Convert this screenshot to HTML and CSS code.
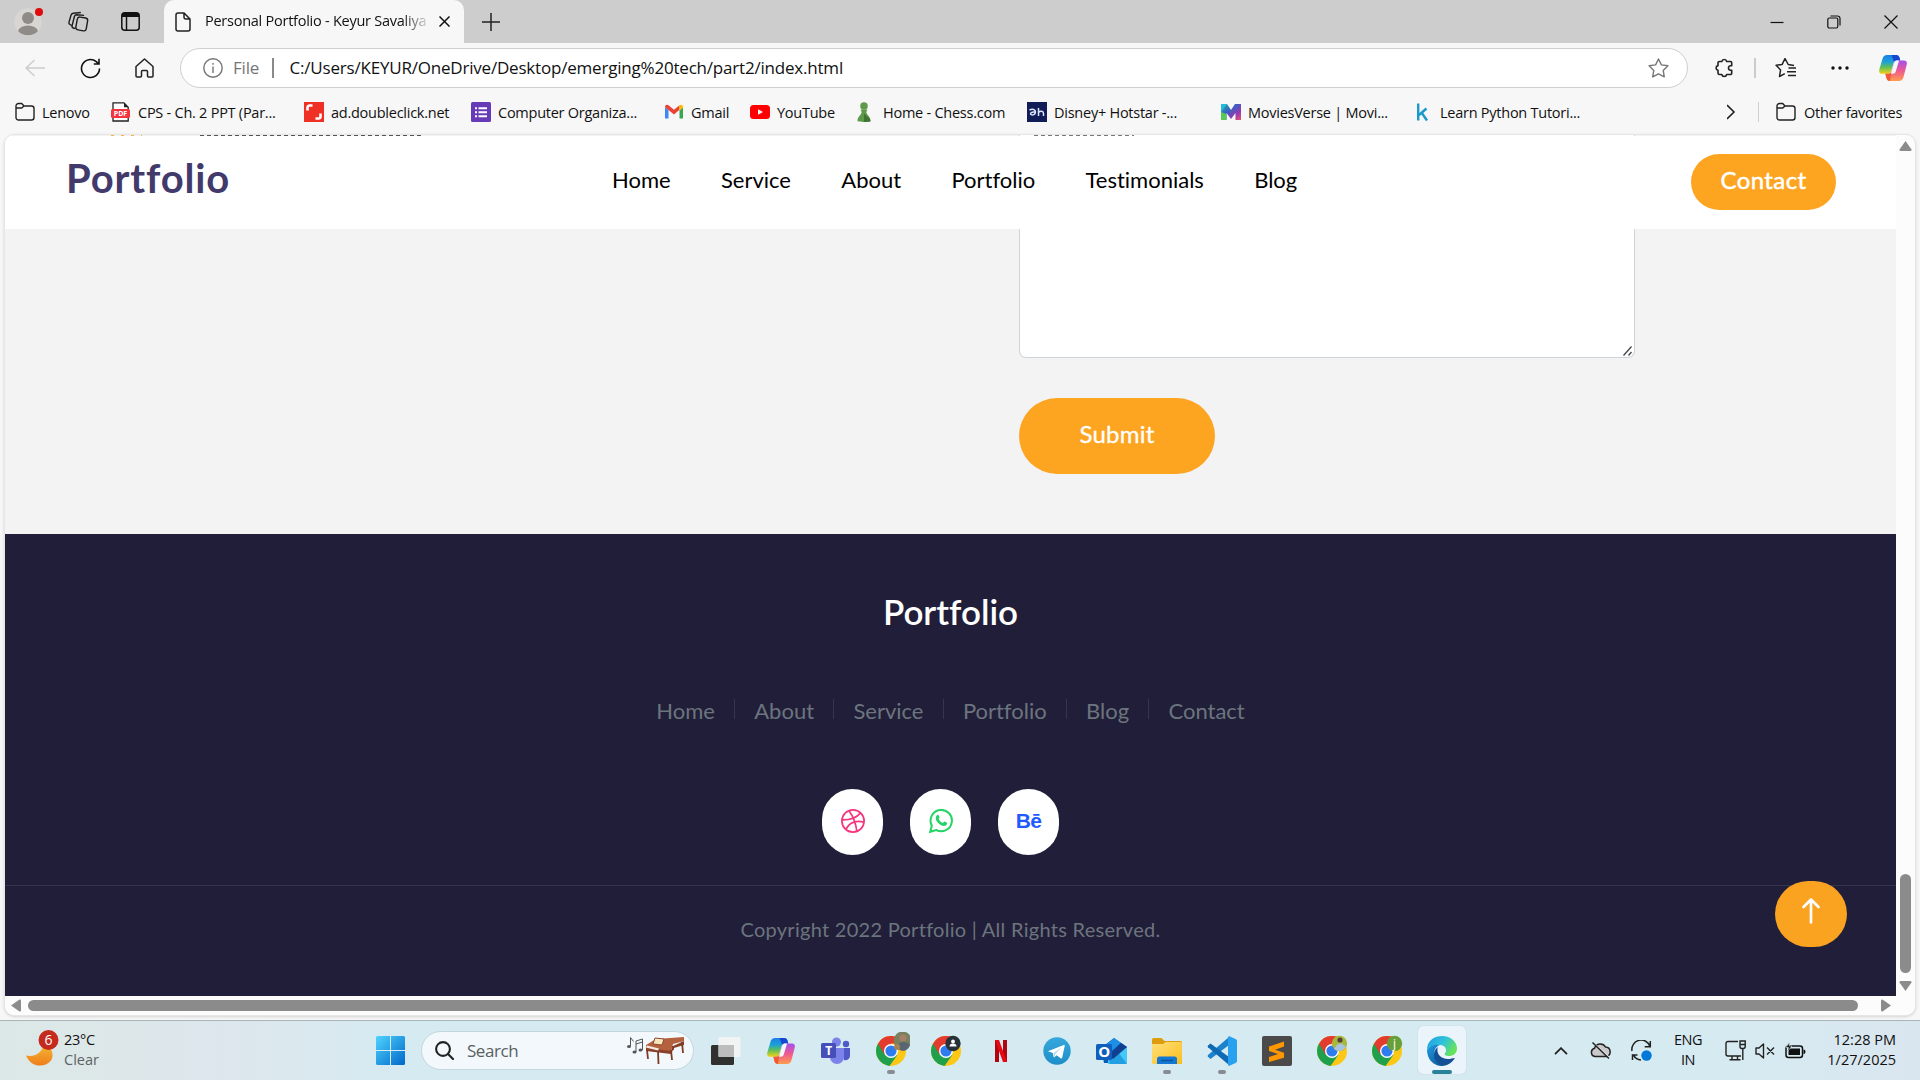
FILE: index.html
```html
<!DOCTYPE html>
<html lang="en">
<head>
<meta charset="utf-8">
<title>Personal Portfolio - Keyur Savaliya</title>
<link rel="stylesheet" href="styles.css">
</head>
<body>
<svg class="defs" aria-hidden="true">
  <defs>
    <linearGradient id="cpBlue" x1="0" y1="0" x2="0" y2="1"><stop offset="0" stop-color="#1b7ee8"/><stop offset=".35" stop-color="#1aa0d8"/><stop offset=".65" stop-color="#5fbf5a"/><stop offset="1" stop-color="#f5d312"/></linearGradient>
    <linearGradient id="cpPink" x1="0" y1="0" x2="0" y2="1"><stop offset="0" stop-color="#a44ff0"/><stop offset=".5" stop-color="#ee5a90"/><stop offset="1" stop-color="#ff9d4d"/></linearGradient>
    <linearGradient id="win" x1="0" y1="0" x2="1" y2="1"><stop offset="0" stop-color="#4fd4ff"/><stop offset="1" stop-color="#0067c8"/></linearGradient>
    <linearGradient id="moon" x1="0" y1="0" x2="0" y2="1"><stop offset="0" stop-color="#f6bb35"/><stop offset="1" stop-color="#ee7d1c"/></linearGradient>
    <linearGradient id="tg" x1="0" y1="0" x2="0" y2="1"><stop offset="0" stop-color="#36a8dc"/><stop offset="1" stop-color="#1d8ec9"/></linearGradient>
    <linearGradient id="fold" x1="0" y1="0" x2="1" y2="1"><stop offset="0" stop-color="#ffe07a"/><stop offset="1" stop-color="#fbbd1e"/></linearGradient>
    <linearGradient id="edgeTop" x1="0" y1="0" x2="1" y2=".5"><stop offset="0" stop-color="#1f9be0"/><stop offset=".55" stop-color="#2fc3dc"/><stop offset="1" stop-color="#66e35b"/></linearGradient>
    <linearGradient id="edgeLow" x1="0" y1="0" x2="1" y2="1"><stop offset="0" stop-color="#1b9de2"/><stop offset="1" stop-color="#114a8b"/></linearGradient>
    <linearGradient id="movie" x1="0" y1="0" x2="1" y2="1"><stop offset="0" stop-color="#18b9b0"/><stop offset=".4" stop-color="#3b5fc4"/><stop offset=".7" stop-color="#8e3bb0"/><stop offset="1" stop-color="#f0506e"/></linearGradient>
    <symbol id="copilot" viewBox="0 0 28 26">
      <path d="M8 0h9c2 0 3 1 3.600 3l.6 2.500h-3c-2 0-3 .8-3.600 2.700l-2.400 7.800c-.6 2-1.600 2.800-3.600 2.800H3C.6 18.800-.3 17 .3 14.600L3.600 3.500C4.300 1.200 5.700 0 8 0z" fill="url(#cpBlue)"/>
      <path d="M12.500 0H17c2 0 3 1 3.600 3l.6 2.500h-3c-1.500 0-2.500.4-3.100 1.500z" fill="#1747cf"/>
      <path d="M20 26h-9c-2 0-3-1-3.600-3l-1-4.200h2.500c2 0 3-.8 3.600-2.800l2.500-7.800c.6-2 1.600-2.700 3.500-2.700H25c2.400 0 3.400 1.900 2.700 4.300l-3.300 12.700C23.700 24.800 22.300 26 20 26z" fill="url(#cpPink)"/>
      <path d="M6.400 18.800h2.500c2 0 3-.8 3.600-2.800L11 26c-2 0-3-1-3.600-3z" fill="#ef5a35"/>
      <path d="M15.200 7.500c.6-1.400 1.500-2 3.300-2h1.600l-3.300 10.800c-.6 1.800-1.500 2.500-3.300 2.500h-1.600z" fill="#f4f6fa"/>
    </symbol>
    <symbol id="chrome" viewBox="0 0 30 30">
      <circle cx="15" cy="15" r="15" fill="#fdc715"/>
      <path d="M15 15 L2 7.500 A15 15 0 0 0 13.500 29.900 L21.500 18.800z" fill="#1ea04c"/>
      <path d="M2 7.500A15 15 0 0 1 28 7.500H15L8.500 18.800z" fill="#e33b2e"/>
      <circle cx="15" cy="15" r="7" fill="#fff"/><circle cx="15" cy="15" r="5.600" fill="#2f7bf0"/>
    </symbol>
    <symbol id="folder" viewBox="0 0 20 20">
      <path d="M1 4a2.500 2.500 0 0 1 2.500-2.500h3.200L9 4h7.500A2.500 2.500 0 0 1 19 6.500v9a2.500 2.500 0 0 1-2.500 2.500h-13A2.500 2.500 0 0 1 1 15.500zM1 6h5.700L9 4" fill="none" stroke="#222" stroke-width="1.400"/>
    </symbol>
  </defs>
</svg>

<div class="tabbar">
  <div class="tab-tools">
    <svg class="avatar" width="30" height="34" viewBox="0 0 30 34"><circle cx="15" cy="19" r="13.800" fill="#d8d6d2"/><circle cx="15" cy="15" r="6" fill="#8f8b86"/><path d="M5 28a10.200 7 0 0 1 20 0 13.800 13.800 0 0 1-20 0z" fill="#8f8b86"/><circle cx="26" cy="9" r="4" fill="#e00b0b"/></svg>
    <svg width="22" height="22" viewBox="0 0 22 22" fill="none" stroke="#1c1c1c" stroke-width="1.400"><rect x="9.500" y="6.500" width="10.500" height="13" rx="2.500" transform="rotate(10 15 13)"/><path d="M8.200 17.500 6.400 17a2 2 0 0 1-1.300-2.400L7.400 5.500a2.500 2.500 0 0 1 2.200-1.700l7.500.6M4.500 14.500 3 13.500a2 2 0 0 1-1-2.400L4 4.300A3 3 0 0 1 6.300 2.200l7.500-.7"/></svg>
    <svg width="19" height="19" viewBox="0 0 19 19"><rect x=".8" y=".8" width="17.400" height="17.400" rx="3" fill="none" stroke="#111" stroke-width="1.500"/><path d="M1 5V3a2 2 0 0 1 2-2h13a2 2 0 0 1 2 2v2z" fill="#111"/><path d="M5.500 5v13" stroke="#111" stroke-width="1.500"/></svg>
  </div>
  <div class="tab">
    <svg width="16" height="20" viewBox="0 0 16 20" fill="none" stroke="#222" stroke-width="1.500"><path d="M1 3a2 2 0 0 1 2-2h6l6 6v10a2 2 0 0 1-2 2H3a2 2 0 0 1-2-2zM9 1v4a2 2 0 0 0 2 2h4"/></svg>
    <span class="tab-title">Personal Portfolio - Keyur Savaliya</span>
    <svg class="tab-close" width="11" height="11" viewBox="0 0 11 11" stroke="#111" stroke-width="1.500"><path d="M.5.5l10 10M10.500.5l-10 10"/></svg>
  </div>
  <svg class="plus" width="18" height="18" viewBox="0 0 18 18" stroke="#222" stroke-width="1.500"><path d="M9 0v18M0 9h18"/></svg>
  <div class="window-buttons">
    <svg width="14" height="14" viewBox="0 0 14 14" stroke="#111" stroke-width="1.200"><path d="M.5 7.500h13"/></svg>
    <svg width="14" height="14" viewBox="0 0 14 14" fill="none" stroke="#111" stroke-width="1.200"><rect x=".8" y="3" width="10" height="10" rx="1.500"/><path d="M3.500 1h7a2.500 2.500 0 0 1 2.500 2.500V10.500"/></svg>
    <svg width="14" height="14" viewBox="0 0 14 14" stroke="#111" stroke-width="1.200"><path d="M.5.5l13 13M13.500.5l-13 13"/></svg>
  </div>
</div>

<div class="toolbar">
  <div class="nav-buttons">
    <svg width="20" height="18" viewBox="0 0 20 18" fill="none" stroke="#ccc" stroke-width="1.400"><path d="M9.500 1 1 9l8.500 8M1 9h19"/></svg>
    <svg width="21" height="21" viewBox="0 0 21 21" fill="none" stroke="#111" stroke-width="1.600"><path d="M19.500 10.500a9 9 0 1 1-3.200-6.900L18.800 6M19 .8V6h-5.200"/></svg>
    <svg width="19" height="20" viewBox="0 0 19 20" fill="none" stroke="#222" stroke-width="1.500" stroke-linejoin="round"><path d="M1 8.500 9.500 1 18 8.500V18a1 1 0 0 1-1 1h-3.500a1 1 0 0 1-1-1v-4.500a1 1 0 0 0-1-1h-4a1 1 0 0 0-1 1V18a1 1 0 0 1-1 1H2a1 1 0 0 1-1-1z"/></svg>
  </div>
  <div class="address">
    <svg width="20" height="20" viewBox="0 0 20 20" fill="none" stroke="#757575" stroke-width="1.400"><circle cx="10" cy="10" r="9.200"/><path d="M10 8.500V15M10 5v1.800"/></svg>
    <span class="scheme">File</span><i class="bar"></i>
    <span class="url">C:/Users/KEYUR/OneDrive/Desktop/emerging%20tech/part2/index.html</span>
    <svg class="star" width="21" height="20" viewBox="0 0 21 20" fill="none" stroke="#777" stroke-width="1.400" stroke-linejoin="round"><path d="M10.500 1l2.900 5.900 6.500.9-4.700 4.600 1.100 6.500-5.800-3.100-5.800 3.100 1.100-6.500L1.100 7.800l6.500-.9z"/></svg>
  </div>
  <div class="toolbar-right">
    <svg width="20" height="20" viewBox="0 0 20 20" fill="none" stroke="#222" stroke-width="1.600" stroke-linejoin="round"><path d="M5.500 3.500h2.300a2.500 2.500 0 0 1 4.900 0h3.800a1.200 1.200 0 0 1 1.200 1.200v3.100h-1a2.200 2.200 0 0 0 0 4.400h1v3.100a1.200 1.200 0 0 1-1.200 1.200h-3.800a2.500 2.500 0 0 1-4.900 0H5.500a1.500 1.500 0 0 1-1.500-1.500v-2.700a2.400 2.400 0 0 1 0-4.700V5a1.500 1.500 0 0 1 1.500-1.500z"/></svg>
    <i class="bar"></i>
    <svg width="22" height="20" viewBox="0 0 22 20" fill="none" stroke="#222" stroke-width="1.500" stroke-linejoin="round"><path d="M19 8l-5.800-1L10 1 7.200 6.900l-6.100.9 4.500 4.600L4.500 19l5.300-2.900M13.500 10.400H21M12 14.200h9M13 18h8" transform="translate(0 -.500)"/></svg>
    <svg width="18" height="4" viewBox="0 0 18 4" fill="#111"><circle cx="2" cy="2" r="1.700"/><circle cx="9" cy="2" r="1.700"/><circle cx="16" cy="2" r="1.700"/></svg>
    <svg width="28" height="26"><use href="#copilot"/></svg>
  </div>
</div>

<div class="bookmarks">
  <span class="bm"><svg><use href="#folder"/></svg>Lenovo</span>
  <span class="bm"><svg viewBox="0 0 20 20"><path d="M2 .8h11l4.200 4.400V19H2z" fill="#fff" stroke="#222" stroke-width="1.300"/><path d="M13 .8v4.400h4.200" fill="#222"/><rect x="0" y="7" width="19" height="9" rx="1.500" fill="#f5333f"/><text x="9.500" y="14" text-anchor="middle" class="pdf">PDF</text></svg>CPS - Ch. 2 PPT (Par...</span>
  <span class="bm"><svg viewBox="0 0 20 20"><path fill="#ee3124" d="M0 0h20v20H0z"/><path d="M3.500 8.500V5.500a2 2 0 0 1 2-2h3M16.500 11.500v3a2 2 0 0 1-2 2h-3" fill="none" stroke="#fff" stroke-width="2.600"/></svg>ad.doubleclick.net</span>
  <span class="bm"><svg viewBox="0 0 20 20"><rect width="20" height="20" rx="1.500" fill="#673ab7"/><path d="M4 6.200h2M4 10.200h2M4 14.200h2M7.500 6.200H16M7.500 10.200H16M7.500 14.200H16" stroke="#fff" stroke-width="2"/></svg>Computer Organiza...</span>
  <span class="bm"><svg viewBox="0 0 20 20"><path d="M1 5v11.500h3.500V8z" fill="#4285f4"/><path d="M19 5v11.500h-3.500V8z" fill="#34a853"/><path d="M1 5c0-2.500 2.300-2.800 3.500-1.700L10 7.800l5.500-4.500v4.500L10 12.500 4.500 8z" fill="#ea4335"/><path d="M15.500 3.300C16.900 2.200 19 2.700 19 5v.8l-3.500 3z" fill="#fbbc04"/></svg>Gmail</span>
  <span class="bm"><svg viewBox="0 0 20 20"><rect y="3" width="20" height="14" rx="3.500" fill="#f00"/><path d="M8 7.200v5.600l5-2.800z" fill="#fff"/></svg>YouTube</span>
  <span class="bm"><svg viewBox="0 0 20 20" fill="#5d9948"><circle cx="8" cy="4" r="3.800"/><path d="M4.500 7.500h7L10.300 10c.5 3.500 4.200 4 4.200 9 0 1.200-13 1.200-13 0 0-5 3.700-5.500 4.200-9z"/><path d="M8 11c.8 3 6.500 4 6.500 8 0 .7-4 1-6.500.9z" fill="#3f7434"/></svg>Home - Chess.com</span>
  <span class="bm"><svg viewBox="0 0 20 20"><path fill="#101d56" d="M0 0h20v20H0z"/><path d="M2.500 8c3-1.500 6-.5 6 2s-3 3.500-4.500 2.500S5 9.500 8 10.200M11.500 6v8M11.500 10.500c2-2 5-1.500 5 1V14" fill="none" stroke="#dce4ff" stroke-width="1.500"/></svg>Disney+ Hotstar -...</span>
  <span class="bm"><svg viewBox="0 0 20 20"><path d="M0 2h6l4 6 4-6h6v16h-5.500v-7L10 17l-4.500-6v7H0z" fill="url(#movie)"/><path d="M0 2h6l-6 8z" fill="#26bdd6"/><path d="M0 10l5.500 2v6H0z" fill="#57c957"/></svg>MoviesVerse | Movi...</span>
  <span class="bm"><svg viewBox="0 0 20 20" fill="none" stroke="#1a9acb" stroke-width="2.400"><path d="M5.200 1.500v17M13.500 6.500 6 13M8.500 10.500l5.500 8"/></svg>Learn Python Tutori...</span>
  <span class="bm more"><svg viewBox="0 0 20 20" fill="none" stroke="#222" stroke-width="1.600"><path d="M0 3l7 7-7 7"/></svg></span>
  <span class="bm other"><svg><use href="#folder"/></svg>Other favorites</span>
</div>

<div class="frame">
  <div class="row">
    <main class="page">
      <div class="sliver"><i class="s1"></i><i class="s2"></i><i class="s3"></i></div>
      <header class="site-header">
        <div class="logo">Portfolio</div>
        <nav class="menu"><a>Home</a><a>Service</a><a>About</a><a>Portfolio</a><a>Testimonials</a><a>Blog</a></nav>
        <a class="contact">Contact</a>
      </header>
      <section class="form">
        <div class="message"><svg width="9" height="10" viewBox="0 0 9 10" stroke="#444" stroke-width="1.300"><path d="M.5 9.500l8-9M5.500 9.500l3-3.500"/></svg></div>
        <a class="submit">Submit</a>
      </section>
      <footer class="footer">
        <h2>Portfolio</h2>
        <nav class="links"><a>Home</a><a>About</a><a>Service</a><a>Portfolio</a><a>Blog</a><a>Contact</a></nav>
        <div class="social">
          <a><svg width="24" height="24" viewBox="0 0 16 16" fill="none" stroke="#f5357f" stroke-width="1.150"><circle cx="8" cy="8" r="7.400"/><path d="M5.300 1.200C7.800 4.500 9.800 9 10.600 15M.7 7.300c5 .1 9.300-.8 12.200-4.600M3.200 13.500C5.500 9.300 9.500 7.300 15.300 8.700"/></svg></a>
          <a><svg width="24" height="24" viewBox="0 0 16 16"><path d="M.8 15.200l1.100-4.100A7.100 7.100 0 1 1 4.800 14z" fill="none" stroke="#25d366" stroke-width="1.350"/><path d="M5.300 4.100c.6-.6 1-.3 1.200.2l.5 1.200c.2.500-.5 1-.5 1.300.4 1 1.400 1.900 2.600 2.400.5 0 .8-1 1.200-.9l1.500.7c.6.300.1 1.600-.5 2-1.500.8-3.600-.1-5-1.500C4.500 7.700 3.900 5.500 5.300 4.100z" fill="#25d366"/></svg></a>
          <a class="behance">Bē</a>
        </div>
        <p class="copyright">Copyright 2022 Portfolio | All Rights Reserved.</p>
      </footer>
      <a class="to-top"><svg width="18" height="26" viewBox="0 0 18 26" fill="none" stroke="#fff" stroke-width="2.700" stroke-linecap="round" stroke-linejoin="round"><path d="M9 24.500v-23M1.500 9 9 1.500 16.500 9"/></svg></a>
    </main>
    <div class="vscroll">
      <svg width="13" height="10" viewBox="0 0 13 10" fill="#8b8b8b"><path d="M6.500 0 12.500 8.500q0 1.500-1 1.500h-10q-1 0-1-1.500z"/></svg>
      <i class="vthumb"></i>
      <svg width="13" height="10" viewBox="0 0 13 10" fill="#8b8b8b"><path d="M6.500 10 12.500 1.500q0-1.500-1-1.500h-10q-1 0-1 1.500z"/></svg>
    </div>
  </div>
  <div class="hscroll">
    <svg width="10" height="13" viewBox="0 0 10 13" fill="#8b8b8b"><path d="M0 6.500 8.500.5q1.500 0 1.500 1v10q0 1-1.500 1z"/></svg>
    <i class="hthumb"></i>
    <svg width="10" height="13" viewBox="0 0 10 13" fill="#8b8b8b"><path d="M10 6.500 1.500.5Q0 .5 0 1.500v10q0 1 1.500 1z"/></svg>
  </div>
</div>

<div class="taskbar">
  <div class="weather">
    <svg width="34" height="36" viewBox="0 0 34 36"><path d="M1 25.500c10 2 16-3 18-12 9 4 10 12 7 17-5 7-20 8-25-5z" fill="url(#moon)"/><circle cx="23.500" cy="10" r="10" fill="#c42b1c"/><text x="23.500" y="15" text-anchor="middle" class="badge">6</text></svg>
    <div><div>23°C</div><div class="dim">Clear</div></div>
  </div>
  <svg class="start" width="29" height="29" viewBox="0 0 29 29" fill="url(#win)"><path d="M1.500 0H14v14H0V1.500Q0 0 1.500 0zM15 0h12.500Q29 0 29 1.500V14H15zM0 15h14v14H1.500Q0 29 0 27.500zM15 15h14v12.500q0 1.500-1.500 1.500H15z"/></svg>
  <div class="search">
    <svg width="19" height="19" viewBox="0 0 19 19" fill="none" stroke="#222" stroke-width="2.100" stroke-linecap="round"><circle cx="8" cy="8" r="6.900"/><path d="M13 13l5 5"/></svg>
    <span>Search</span>
    <svg class="piano" width="60" height="30" viewBox="0 0 60 30"><g fill="#555"><ellipse cx="3" cy="10.500" rx="2" ry="1.500"/><ellipse cx="8.500" cy="16" rx="2" ry="1.500"/><ellipse cx="14.500" cy="14" rx="2" ry="1.500"/></g><path d="M4.500 10V1.500l3 4M10 16V5l6.500-2v11M10 8l6.500-2" fill="none" stroke="#555" stroke-width="1"/><path d="M20 9 30 3 58 1v4L47 8l-2 8-25-2z" fill="#b5603f"/><path d="M20 12l25 3 2-5 11-5v4l-10 3-3 6-25-3z" fill="#8a4129"/><path d="M21 14l1 9M32 15l.5 13M45 14l1 10M56 6l1 11M47 10v4" stroke="#7d3b26" stroke-width="1.800"/><path d="M21 9.500l12 3-1 2-12-3z" fill="#f5eee2"/><path d="M29 2l9 1-2 6-9-1z" fill="#f6e7bd" stroke="#8b4a2d" stroke-width="1"/></svg>
  </div>
  <div class="apps">
    <span class="app"><svg width="30" height="30" viewBox="0 0 30 30"><rect x="0" y="9" width="23" height="20" rx="1.500" fill="#30302f"/><rect x="7.500" y="1" width="22" height="20" rx="1.500" fill="#f4f4f4" fill-opacity=".92"/><path d="M7.500 9H23v12H7.500z" fill="#bdbdbd"/></svg></span>
    <span class="app"><svg width="28" height="26"><use href="#copilot"/></svg></span>
    <span class="app"><svg width="30" height="28" viewBox="0 0 30 28"><circle cx="25" cy="7" r="3.200" fill="#5059c9"/><path d="M21 11h8v8a4.500 4.500 0 0 1-6 4z" fill="#5059c9"/><circle cx="15.500" cy="5" r="4.500" fill="#7b83eb"/><path d="M9 11h14v9a7 7 0 0 1-14 0z" fill="#7b83eb"/><rect y="6" width="15" height="15" rx="1.500" fill="#464eb8"/><text x="7.500" y="18" text-anchor="middle" class="tile-letter small">T</text></svg></span>
    <span class="app open"><svg width="38" height="38" viewBox="0 0 38 38"><use href="#chrome" x="4" y="4" width="30" height="30"/><circle cx="30" cy="8.500" r="8" fill="#78805f" transform="translate(-3 -1) scale(1.120)"/><circle cx="31" cy="6" r="3.500" fill="#a58067"/><path d="M24 16q6-11 14-3-2 6-8 6z" fill="#59666f"/><circle cx="25" cy="15" r="3" fill="#a38456"/></svg></span>
    <span class="app"><svg width="38" height="38" viewBox="0 0 38 38"><use href="#chrome" x="4" y="4" width="30" height="30"/><circle cx="26" cy="11.500" r="7.700" fill="#263238"/><circle cx="26" cy="9.500" r="1.900" fill="#fff"/><path d="M22.500 14.500q0-3 3.500-3t3.500 3z" fill="#fff"/></svg></span>
    <span class="app"><svg width="12" height="22" viewBox="0 0 12 22"><path d="M0 0h4v22H0zM8 0h4v22H8z" fill="#b1060f"/><path d="M0 0h4l8 22H8z" fill="#e50914"/></svg></span>
    <span class="app"><svg width="28" height="28" viewBox="0 0 28 28"><circle cx="14" cy="14" r="13.700" fill="url(#tg)"/><path d="M5.500 14 20.700 8c1-.3 1.200.3 1 1l-2.500 11.500c-.2 1-.9 1.200-1.600.7l-4-3-2 1.900c-.5.400-.9.100-1-.4l-.8-3.800-4.200-1.300c-.6-.2-.6-.4-.1-.6z" fill="#fff"/><path d="M10.500 16l8-5.500-6.200 6.500-.8 3z" fill="#b9d7ea"/></svg></span>
    <span class="app"><svg width="31" height="28" viewBox="0 0 31 28"><path d="M5 11 18 1l13 9v14a2 2 0 0 1-2 2H8z" fill="#0a5bb3"/><path d="M7 10 18 1l7 5-14 12z" fill="#1c8fe6"/><path d="M12 20 31 10v14q0 3-3 3H12z" fill="#42c9f5"/><path d="M12 20l10-5 9 12H14z" fill="#23a0e4"/><path d="M13 18 25 6l6 4-14 12z" fill="#103f91"/><rect y="7" width="16" height="16" rx="1.500" fill="#0f5fbd"/><text x="8" y="20" text-anchor="middle" class="tile-letter">O</text></svg></span>
    <span class="app open"><svg width="30" height="28" viewBox="0 0 30 28"><path d="M0 2.500Q0 1 1.500 1h8L12.500 4h16Q30 4 30 5.500V14H0z" fill="#dd9d0e"/><path d="M0 7h11l3-2h14.500Q30 5 30 6.500V27H1.500Q0 27 0 25.500z" fill="url(#fold)"/><path d="M5 27v-5q0-2.500 2.500-2.500h15q2.500 0 2.500 2.500v5z" fill="#1377d4"/><path d="M9 23.500h12" stroke="#0b559f" stroke-width="1.500"/></svg></span>
    <span class="app open"><svg width="30" height="30" viewBox="0 0 30 30"><path d="M22 1v8L3.500 23 1 20.800q-.8-.8 0-1.700z" fill="#1a83cc"/><path d="M22 29v-8L3.500 7.500 1 9.500q-.8.800 0 1.700z" fill="#0f6ab5"/><path d="M22 0l7 3.200q1 .5 1 1.800v20q0 1.300-1 1.800L22 30q-1-.5-1-2V2q0-1.500 1-2z" fill="#28a1f0"/></svg></span>
    <span class="app"><svg width="30" height="30" viewBox="0 0 30 30"><rect width="30" height="30" rx="2" fill="#4a4a4a"/><path d="M7 10.500 22 5.500v5L13 13.700l9 3v5L7 26v-5l9-3-9-3z" fill="#ff9800"/></svg></span>
    <span class="app"><svg width="38" height="38" viewBox="0 0 38 38"><use href="#chrome" x="4" y="4" width="30" height="30"/><circle cx="26.500" cy="11.500" r="7.700" fill="#a7b83c"/><circle cx="27" cy="8" r="2.600" fill="#53423a"/><path d="M21 17q5-10 12-2-5 7-12 2z" fill="#a9c4dd"/></svg></span>
    <span class="app"><svg width="38" height="38" viewBox="0 0 38 38"><use href="#chrome" x="4" y="4" width="30" height="30"/><circle cx="26.500" cy="11.500" r="7.700" fill="#689f38"/><text x="26.500" y="15.500" text-anchor="middle" class="initial">j</text></svg></span>
    <span class="app active"><svg width="30" height="30" viewBox="0 0 30 30"><path d="M0 14C0 4 8 0 15 0c9 0 15 6 15 12.500 0 5-4 7.500-8 7.500-3 0-5-1-4.300-2.200 2.800-3 1.300-8.300-4-8.800C8 8.500 3 9.500 0 14z" fill="url(#edgeTop)"/><path d="M0 14c2.500-4.500 8-6 13-5-6 2-7 9-4 14 3 4 8 6.500 12 5.500-3 1.500-7 2-10 1C4 27.500 0 21 0 14z" fill="url(#edgeLow)"/><path d="M11 11c-2 5 1 12 10 12 3 0 6-1.500 6.500-1 .6.600-3 5-7 6.700C14 30.500 7 26 7 19c0-3.500 1.500-6.500 4-8z" fill="#124f95"/></svg></span>
  </div>
  <div class="tray">
    <svg width="14" height="8" viewBox="0 0 14 8" fill="none" stroke="#222" stroke-width="1.800"><path d="M1 7.200l6-6 6 6"/></svg>
    <svg width="21" height="17" viewBox="0 0 21 17"><path d="M5 14.500a4.200 4.200 0 0 1-.5-8.200A6 6 0 0 1 15.500 5a4.800 4.800 0 0 1 .8 9.500z" fill="#c9c9c9" stroke="#222" stroke-width="1.500"/><path d="M3.500 1l16.500 15" stroke="#e8eff2" stroke-width="1.500"/><path d="M2.500.5l16.500 16" stroke="#222" stroke-width="1.500"/></svg>
    <svg width="21" height="21" viewBox="0 0 21 21" fill="none" stroke="#222" stroke-width="1.500"><path d="M1 11A9.300 9.300 0 0 1 19 6.500M19.300 1v5.700h-5.600M10 20a9 9 0 0 1-7.500-4.800M1.500 20v-5h5"/><circle cx="15.500" cy="15.500" r="5.200" fill="#0078d7" stroke="none"/></svg>
    <div class="lang">ENG<br>IN</div>
    <svg width="21" height="21" viewBox="0 0 21 21" fill="none" stroke="#222" stroke-width="1.400"><path d="M13 1.500H3a2 2 0 0 0-2 2V14a2 2 0 0 0 2 2h13M7 16v3.800M12.500 16v3.800M4.500 19.800h11M17.800 9v11M15 1h5.200v5.500a2 2 0 0 1-2 2H17a2 2 0 0 1-2-2zM15 4.500h5"/></svg>
    <svg width="20" height="16" viewBox="0 0 20 16" fill="none" stroke="#222" stroke-width="1.400" stroke-linejoin="round"><path d="M1 5h3l4.500-4v14L4 11H1zM12 4.500l7 7M19 4.500l-7 7"/></svg>
    <svg width="21" height="17" viewBox="0 0 21 17"><rect x="1" y="4" width="16.500" height="11.500" rx="2.500" fill="none" stroke="#111" stroke-width="1.500"/><rect x="3.500" y="6.500" width="11.500" height="6.500" fill="#111"/><path d="M18.500 7.500q2 0 2 2.200t-2 2.200z" fill="#111"/><path d="M4.500 0 1 5.500h2.500L2.500 9.500 7 4H4.200z" fill="#111" stroke="#d7e9f0" stroke-width=".6"/></svg>
    <div class="clock">12:28 PM<br>1/27/2025</div>
  </div>
</div>
</body>
</html>
```
FILE: styles.css
```css
* { box-sizing: border-box; }
body {
  margin: 0; width: 1920px; height: 1080px; overflow: hidden;
  display: flex; flex-direction: column;
  background: #f7f7f7; color: #111;
  font-family: "Open Sans", "Noto Sans", sans-serif; font-size: 14.5px; letter-spacing: -0.25px;
}
svg { display: block; flex: none; }
.defs { position: absolute; width: 0; height: 0; }

/* browser tab strip */
.tabbar { height: 43px; background: #cdcdcd; display: flex; align-items: center; flex: none; }
.tab-tools { width: 164px; padding-left: 13px; display: flex; align-items: center; }
.tab-tools svg:nth-child(1) { margin-bottom: 4px; }
.tab-tools svg:nth-child(2) { margin-left: 24px; }
.tab-tools svg:nth-child(3) { margin-left: 32px; }
.tab {
  width: 300px; height: 43px; background: #f7f7f7; border-radius: 10px 10px 0 0;
  display: flex; align-items: center; padding: 0 14px 0 11px;
}
.tab-title {
  margin-left: 14px; width: 224px; overflow: hidden; white-space: nowrap; padding-bottom: 2px;
  -webkit-mask-image: linear-gradient(90deg, #000 88%, transparent 101%);
  mask-image: linear-gradient(90deg, #000 88%, transparent 101%);
}
.tab-close { margin-left: auto; }
.plus { margin-left: 18px; }
.window-buttons { margin-left: auto; padding-right: 22px; display: flex; gap: 43px; }

/* address row */
.toolbar { height: 50px; flex: none; display: flex; align-items: center; padding-right: 13px; }
.nav-buttons { width: 180px; padding-left: 25px; display: flex; align-items: center; }
.nav-buttons svg:nth-child(2) { margin-left: 35px; }
.nav-buttons svg:nth-child(3) { margin-left: 34px; }
.address {
  width: 1508px; height: 40px; background: #fff; border: 1px solid #cfcfcf; border-radius: 20px;
  display: flex; align-items: center; padding: 0 18px 0 22px; font-size: 17px; letter-spacing: -0.2px;
}
.address span { padding-bottom: 2px; }
.scheme { margin-left: 10px; width: 39px; color: #767676; }
.bar { width: 1.500px; height: 20px; background: #8a8a8a; }
.url { margin-left: 16px; }
.star { margin-left: auto; }
.toolbar-right { flex: 1; display: flex; align-items: center; padding-left: 26px; }
.toolbar-right .bar { background: #ccc; margin: 0 19px 0 20px; }
.toolbar-right svg:nth-child(4) { margin-left: 34px; }
.toolbar-right svg:nth-child(5) { margin-left: auto; }

/* favorites row */
.bookmarks {
  height: 41px; flex: none; padding: 0 18px 3px 15px; display: grid; align-items: center;
  grid-template-columns: 96px 193px 167px 193px 86px 106px 171px 194px 192px 314px 31px 1fr;
}
.bm { display: flex; align-items: center; gap: 7px; white-space: nowrap; }
.bm svg { width: 20px; height: 20px; }
.other { border-left: 1px solid #d0d0d0; height: 20px; padding-left: 17px; gap: 8px; }
.pdf { font: 700 7px "Open Sans", sans-serif; fill: #fff; letter-spacing: 0; }

/* viewport */
.frame {
  margin: 0 4px 4px; height: 882px; flex: none; border: 1px solid #e6e6e6; border-radius: 10px;
  background: #fcfcfc; overflow: hidden; display: flex; flex-direction: column;
  box-shadow: 0 1px 3px rgba(0, 0, 0, .14);
}
.row { display: flex; height: 861px; }
.page {
  width: 1891px; background: #f3f3f3; display: flex; flex-direction: column; position: relative;
  font-family: Lato, sans-serif; letter-spacing: 0; font-variant-ligatures: none;
}
.sliver { height: 1px; display: flex; flex: none; padding-left: 106px; }
.s1 { width: 31px; background: repeating-linear-gradient(90deg, #f3b34b 0 3px, transparent 3px 10px); }
.s2 { width: 224px; margin-left: 58px; background: repeating-linear-gradient(90deg, #555 0 4px, transparent 4px 7px); }
.s3 { width: 616px; margin-left: 595px; border: solid #ced4da; border-width: 0 1px; background: linear-gradient(90deg, #fff 13px, transparent 13px 114px, #fff 114px), repeating-linear-gradient(90deg, #777 0 4px, #fff 4px 7px); }

.site-header {
  height: 93px; flex: none; background: #fff; display: grid; align-items: center;
  grid-template-columns: 545px 1fr auto; padding: 0 60px 0 61px;
}
.logo { font-size: 40px; font-weight: 700; letter-spacing: .85px; color: #413a6b; padding-bottom: 9px; }
.menu { display: flex; gap: 50.300px; font-size: 22px; color: #000; padding: 0 0 6px 1px; }
.contact {
  width: 145px; height: 56px; border-radius: 28px; background: #fda521; color: #fff;
  font-size: 24px; letter-spacing: .4px; display: flex; align-items: center; justify-content: center;
  margin-bottom: 2px; padding-bottom: 4px; font-weight: 400; -webkit-text-stroke: .5px #fff;
}
.form { height: 305px; flex: none; padding-left: 1014px; }
.message {
  width: 616px; height: 129px; background: #fff; border: 1px solid #ced4da; border-top: 0;
  border-radius: 0 0 7px 7px; display: flex; align-items: flex-end; justify-content: flex-end; padding: 1px 2px;
}
.submit {
  margin-top: 40px; width: 196px; height: 76px; border-radius: 38px; background: #fda521; color: #fff;
  display: flex; align-items: center; justify-content: center; font-size: 24px; letter-spacing: .2px; padding-bottom: 6px;
  -webkit-text-stroke: .3px #fff;
}
.footer { flex: 1; background: #211e3a; display: flex; flex-direction: column; align-items: center; }
.footer h2 { margin: 0; height: 150px; line-height: 154px; font-size: 35px; font-weight: 600; color: #fff; }
.links { display: flex; height: 50px; align-items: center; font-size: 22px; color: #6c757d; }
.links a { height: 20px; line-height: 23px; padding: 0 19.200px; }
.links a + a { border-left: 1px solid #37344e; }
.social { margin-top: 55px; padding-right: 20px; display: flex; gap: 27px; }
.social a { width: 61px; height: 66px; border-radius: 30.500px; background: #fff; display: flex; align-items: center; justify-content: center; }
.social a svg { margin-bottom: 2px; }
.social .behance { color: #1f5bff; font: 700 21px "Liberation Sans", sans-serif; letter-spacing: -.6px; padding-bottom: 2px; }
.copyright {
  margin: 30px 0 0; width: 100%; border-top: 1px solid #37344e; text-align: center; line-height: 86px;
  font-size: 20px; letter-spacing: .28px; color: #6c757d;
}
.to-top {
  position: absolute; right: 49px; bottom: 49px; width: 72px; height: 66px; border-radius: 33px;
  background: #fda521; opacity: .99; display: flex; justify-content: center; padding-top: 17px;
}

/* scrollbars */
.vscroll { width: 19px; display: flex; flex-direction: column; align-items: center; padding: 6px 0 5px; }
.vthumb { width: 11px; height: 99px; border-radius: 6px; background: #8b8b8b; margin: auto 0 8px; }
.hscroll { height: 19px; display: flex; align-items: center; padding-left: 6px; }
.hthumb { width: 1830px; height: 11px; border-radius: 6px; background: #8b8b8b; margin: 0 23px 0 7px; }

/* taskbar */
.taskbar {
  flex: 1; border-top: 1px solid #a9b4b9; display: flex; align-items: center;
  background: linear-gradient(90deg, #dce8e6 0, #dde6ec 220px, #d6eaf1 400px, #d6eaf1 1740px, #dae6ef 1920px);
}
.weather { width: 350px; margin-right: 26px; padding-left: 25px; display: flex; gap: 5px; line-height: 20px; }
.weather > svg { margin-top: -1px; }
.weather > div { margin-top: -1px; }
.dim { color: #5c6265; letter-spacing: 0; }
.badge { font: 14px "Open Sans", sans-serif; fill: #fff; }
.search {
  margin-left: 16px; width: 273px; height: 39px; border-radius: 20px; background: #f2f8fb; border: 1px solid #c3d6de;
  display: flex; align-items: center; padding: 0 7px 0 13px; font-size: 17px; letter-spacing: -.45px; color: #5a5f62;
}
.search span { margin-left: 13px; }
.piano { margin-left: auto; }
.apps { display: flex; height: 59px; margin-left: 4.500px; }
.app { width: 55.080px; height: 59px; display: flex; align-items: center; justify-content: center; position: relative; }
.open::after, .active::after {
  content: ""; position: absolute; left: 23.500px; top: 49px; width: 8px; height: 4px; border-radius: 2px; background: #868c90;
}
.active::after { left: 17.500px; width: 20px; background: #27829a; }
.active::before {
  content: ""; position: absolute; left: 3.500px; top: 5px; width: 48px; height: 48px; border-radius: 5px;
  background: #eaf4fa; box-shadow: 0 0 1px #aabac2;
}
.active svg { position: relative; }
.tile-letter { font: 700 15px "Open Sans", sans-serif; fill: #fff; }
.tile-letter.small { font-size: 12px; }
.initial { font: 12px "Open Sans", sans-serif; fill: #fff; }
.tray { margin-left: auto; padding-right: 24px; display: flex; align-items: center; line-height: 20px; letter-spacing: 0; }
.tray svg:nth-child(2) { margin-left: 22px; }
.tray svg:nth-child(3) { margin-left: 20px; }
.lang { width: 34px; margin: 0 20px 0 19px; text-align: center; letter-spacing: -.5px; padding-bottom: 2px; }
.tray svg:nth-child(6) { margin-left: 9px; }
.tray svg:nth-child(7) { margin-left: 10px; }
.clock { width: 90px; text-align: right; padding-bottom: 2px; }
```
